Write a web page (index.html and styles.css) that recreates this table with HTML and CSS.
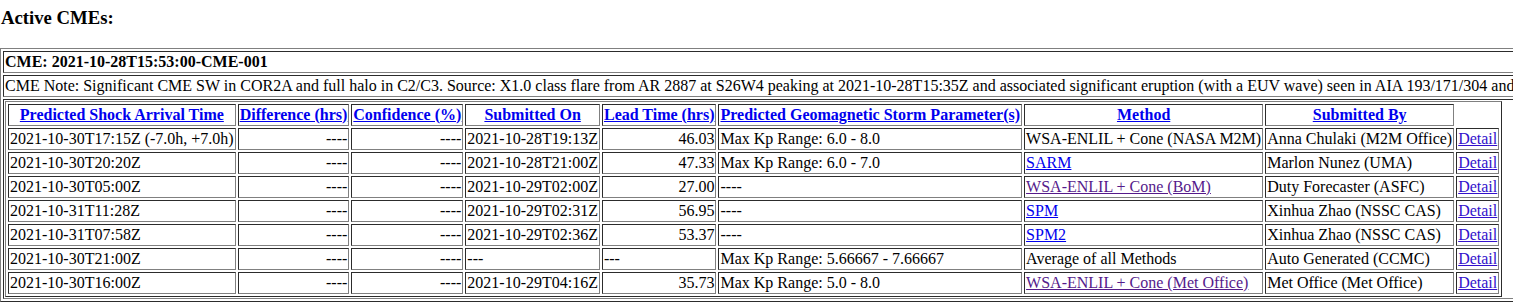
FILE: index.html
```html
<!DOCTYPE html>
<html>
<head>
<meta charset="utf-8">
<title>Active CMEs</title>
<link rel="stylesheet" href="styles.css">
</head>
<body>
<h3 class="title">Active CMEs:</h3>
<table class="grid outer">
  <tr><td class="cme-id">CME: 2021-10-28T15:53:00-CME-001</td></tr>
  <tr><td class="note">CME Note: Significant CME SW in COR2A and full halo in C2/C3. Source: X1.0 class flare from AR 2887 at S26W4 peaking at 2021-10-28T15:35Z and associated significant eruption (with a EUV wave) seen in AIA 193/171/304 and 131 imagery, as well as dimming and post-eruptive arcades.</td></tr>
  <tr><td class="holder">
    <table class="grid inner">
      <tr>
        <th><a href="#">Predicted Shock Arrival Time</a></th>
        <th><a href="#">Difference (hrs)</a></th>
        <th><a href="#">Confidence (%)</a></th>
        <th><a href="#">Submitted On</a></th>
        <th><a href="#">Lead Time (hrs)</a></th>
        <th><a href="#">Predicted Geomagnetic Storm Parameter(s)</a></th>
        <th><a href="#">Method</a></th>
        <th><a href="#">Submitted By</a></th>
      </tr>
      <tr>
        <td>2021-10-30T17:15Z (-7.0h, +7.0h)</td>
        <td class="num">----</td>
        <td class="num">----</td>
        <td>2021-10-28T19:13Z</td>
        <td class="num">46.03</td>
        <td>Max Kp Range: 6.0 - 8.0</td>
        <td>WSA-ENLIL + Cone (NASA M2M)</td>
        <td>Anna Chulaki (M2M Office)</td>
        <td><a class="detail" href="#">Detail</a></td>
      </tr>
      <tr>
        <td>2021-10-30T20:20Z</td>
        <td class="num">----</td>
        <td class="num">----</td>
        <td>2021-10-28T21:00Z</td>
        <td class="num">47.33</td>
        <td>Max Kp Range: 6.0 - 7.0</td>
        <td><a href="#">SARM</a></td>
        <td>Marlon Nunez (UMA)</td>
        <td><a class="detail" href="#">Detail</a></td>
      </tr>
      <tr>
        <td>2021-10-30T05:00Z</td>
        <td class="num">----</td>
        <td class="num">----</td>
        <td>2021-10-29T02:00Z</td>
        <td class="num">27.00</td>
        <td>----</td>
        <td><a class="visited" href="#">WSA-ENLIL + Cone (BoM)</a></td>
        <td>Duty Forecaster (ASFC)</td>
        <td><a class="detail" href="#">Detail</a></td>
      </tr>
      <tr>
        <td>2021-10-31T11:28Z</td>
        <td class="num">----</td>
        <td class="num">----</td>
        <td>2021-10-29T02:31Z</td>
        <td class="num">56.95</td>
        <td>----</td>
        <td><a href="#">SPM</a></td>
        <td>Xinhua Zhao (NSSC CAS)</td>
        <td><a class="detail" href="#">Detail</a></td>
      </tr>
      <tr>
        <td>2021-10-31T07:58Z</td>
        <td class="num">----</td>
        <td class="num">----</td>
        <td>2021-10-29T02:36Z</td>
        <td class="num">53.37</td>
        <td>----</td>
        <td><a href="#">SPM2</a></td>
        <td>Xinhua Zhao (NSSC CAS)</td>
        <td><a class="detail" href="#">Detail</a></td>
      </tr>
      <tr>
        <td>2021-10-30T21:00Z</td>
        <td class="num">----</td>
        <td class="num">----</td>
        <td>---</td>
        <td>---</td>
        <td>Max Kp Range: 5.66667 - 7.66667</td>
        <td>Average of all Methods</td>
        <td>Auto Generated (CCMC)</td>
        <td><a class="detail" href="#">Detail</a></td>
      </tr>
      <tr>
        <td>2021-10-30T16:00Z</td>
        <td class="num">----</td>
        <td class="num">----</td>
        <td>2021-10-29T04:16Z</td>
        <td class="num">35.73</td>
        <td>Max Kp Range: 5.0 - 8.0</td>
        <td><a class="visited" href="#">WSA-ENLIL + Cone (Met Office)</a></td>
        <td>Met Office (Met Office)</td>
        <td><a class="detail" href="#">Detail</a></td>
      </tr>
    </table>
  </td></tr>
</table>
</body>
</html>
```
FILE: styles.css
```css
html, body {
  margin: 0;
  padding: 0;
  background: #ffffff;
}

body {
  font-family: "Liberation Serif", "Times New Roman", serif;
  font-size: 16px;
  color: #000000;
}

.title {
  font-size: 18.72px;
  font-weight: bold;
  margin: 7px 0 18.72px 1px;
}

.grid {
  border: 1px outset #808080;
  border-spacing: 2px;
  border-collapse: separate;
}

.grid td,
.grid th {
  border: 1px inset #808080;
  padding: 1px;
}

.outer {
  white-space: nowrap;
}

.cme-id {
  font-weight: bold;
  text-align: left;
}

.note {
  white-space: nowrap;
}

.inner th {
  font-weight: bold;
  text-align: center;
}

.num {
  text-align: right;
}

a {
  color: #0000ee;
  text-decoration: underline;
}

a.visited {
  color: #551a8b;
}

a.detail {
  color: #3311cc;
}
```
